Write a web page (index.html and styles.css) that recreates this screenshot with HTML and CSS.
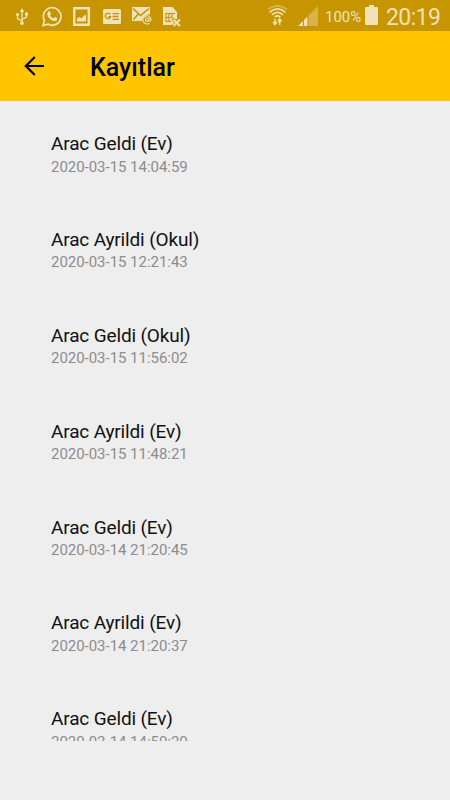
FILE: index.html
```html
<!DOCTYPE html>
<html lang="tr">
<head>
  <meta charset="UTF-8" />
  <meta name="viewport" content="width=device-width, initial-scale=1.0"/>
  <title>Kayıtlar</title>
  <link rel="stylesheet" href="styles.css">
</head>
<body>

  <div class="status-bar">
    <div class="notifications">
      <!-- USB -->
      <svg class="usb" width="14" height="20" viewBox="0 0 14 20">
        <path d="M7 4V16M7 14L2.500 11.500V8M7 12.500L11.500 10V7" fill="none" stroke="currentColor" stroke-width="1.300"/>
        <path d="M7 1L9.300 5H4.700zM10 5.500h3v3h-3z" fill="currentColor"/>
        <circle cx="2.500" cy="7.500" r="1.600" fill="currentColor"/>
        <circle cx="7" cy="16.300" r="1.800" fill="currentColor"/>
      </svg>
      <!-- WhatsApp -->
      <svg class="whatsapp" width="20" height="21" viewBox="0 0 20 21">
        <path d="M1 19.500L2.400 14.500A8.800 8.800 0 1 1 5.900 18.100Z" fill="none" stroke="currentColor" stroke-width="1.700"/>
        <path d="M6.700 5.300C7.300 5 7.900 5.200 8.100 5.700L8.900 7.600C9 8.100 8 8.900 8 9.200C8.800 10.700 9.900 11.700 11.500 12.300C12 12.400 12.500 11 13 11.100L15 12.100C15.500 12.400 15.200 13.800 14.500 14.400C12.500 16 9.600 14.500 7.700 12.700C5.500 10.500 4.200 7.500 6.700 5.300Z" fill="currentColor"/>
      </svg>
      <!-- Gallery -->
      <svg class="gallery" width="17" height="19" viewBox="0 0 17 19">
        <path d="M1.250 1.250h14.500v16.500H1.250z" fill="none" stroke="currentColor" stroke-width="2.400"/>
        <path d="M4 14.500V11.500L6.500 10L8.500 11.500L11 8.500L13 8V14.500z" fill="currentColor"/>
      </svg>
      <!-- News -->
      <svg class="news" width="18" height="15" viewBox="0 0 18 15">
        <rect width="18" height="15" rx="1.500" fill="currentColor"/>
        <path d="M7.300 5.400A2.700 2.700 0 1 0 7.600 7.700H5.300M9.500 4.600H16M9.500 7.500H15.300M9.500 10.400H16" fill="none" stroke="#c39207" stroke-width="1.300"/>
      </svg>
      <!-- Mail -->
      <svg class="mail" width="20" height="19" viewBox="0 0 20 19">
        <path d="M0 1h18v7.500C13.500 8 10.500 10.500 10 15H0z" fill="currentColor"/>
        <path d="M1 2.500L8.500 9.500L17 2.500M1.500 13.500L6.300 8" fill="none" stroke="#c39207" stroke-width="1.500"/>
        <circle cx="15.200" cy="13.700" r="1.700" fill="none" stroke="currentColor" stroke-width="1.100"/>
        <path d="M16.900 11.700V14.600Q18.200 15.800 19.100 13.800A4.100 4.100 0 1 0 17.400 17.200" fill="none" stroke="currentColor" stroke-width="1.100"/>
      </svg>
      <!-- No SIM -->
      <svg class="sim" width="19" height="20" viewBox="0 0 19 20">
        <path d="M0 0H9.500L14 5V11.500L13.500 12.500L10.500 11L8.500 12.500L11.300 15.700L9 18H0z" fill="currentColor"/>
        <path d="M2.500 6.500H12M3 6V14.500H8.500M6 6.500V14M9 6.500V11M3 10.500H9" fill="none" stroke="#c39207" stroke-width="1.100"/>
        <path d="M10.500 12.500L17 19M17 12.500L10.500 19" stroke="currentColor" stroke-width="1.900"/>
      </svg>
    </div>

    <div class="system">
      <!-- Wifi -->
      <svg class="wifi" width="21" height="21" viewBox="0 0 21 21">
        <path d="M1 4.500Q10.500 -3 20 4.500" fill="none" stroke="currentColor" stroke-width="1.700" opacity="0.400"/>
        <path d="M2.500 7.300Q10.500 0.500 18.500 7.300M5 9.800Q10.500 5 16 9.800M7.700 12Q10.500 9.700 13.300 12" fill="none" stroke="currentColor" stroke-width="1.700"/>
        <path d="M8 14V18M12.700 20V16" stroke="currentColor" stroke-width="1.500"/>
        <path d="M5.200 17H10.800L8 20.700zM10 16.500H15.500L12.700 12.800z" fill="currentColor"/>
      </svg>
      <!-- Signal -->
      <svg class="signal" width="20" height="20" viewBox="0 0 20 20">
        <path d="M20 0V20H10.500V9.500z" fill="currentColor" opacity="0.400"/>
        <path d="M9.500 10.500V20H6V14zM5 15V20H0z" fill="currentColor"/>
      </svg>
      <span class="percent">100%</span>
      <!-- Battery -->
      <svg class="battery" width="13" height="20" viewBox="0 0 13 20">
        <path d="M4 0H9V2H12Q13 2 13 3V19Q13 20 12 20H1Q0 20 0 19V3Q0 2 1 2H4z" fill="currentColor"/>
      </svg>
      <span class="clock">20:19</span>
    </div>
  </div>

  <header>
    <svg class="back" width="20" height="20" viewBox="0 0 20 20">
      <path d="M20 10H2M10.800 1L1.800 10L10.800 19" fill="none" stroke="currentColor" stroke-width="2.200"/>
    </svg>
    <h1>Kayıtlar</h1>
  </header>

  <div class="list">
    <div class="item">
      <span class="name">Arac Geldi (Ev)</span>
      <span class="date">2020-03-15 14:04:59</span>
    </div>
    <div class="item">
      <span class="name">Arac Ayrildi (Okul)</span>
      <span class="date">2020-03-15 12:21:43</span>
    </div>
    <div class="item">
      <span class="name">Arac Geldi (Okul)</span>
      <span class="date">2020-03-15 11:56:02</span>
    </div>
    <div class="item">
      <span class="name">Arac Ayrildi (Ev)</span>
      <span class="date">2020-03-15 11:48:21</span>
    </div>
    <div class="item">
      <span class="name">Arac Geldi (Ev)</span>
      <span class="date">2020-03-14 21:20:45</span>
    </div>
    <div class="item">
      <span class="name">Arac Ayrildi (Ev)</span>
      <span class="date">2020-03-14 21:20:37</span>
    </div>
    <div class="item">
      <span class="name">Arac Geldi (Ev)</span>
      <span class="date">2020-03-14 14:50:20</span>
    </div>
  </div>

</body>
</html>
```

FILE: styles.css
```css
body {
  font-family: Roboto, sans-serif;
  margin: 0;
  height: 800px;
  overflow: hidden;
  background-color: #eeeeee;
  color: #111;
}
.status-bar {
  display: flex;
  justify-content: space-between;
  height: 31px;
  padding: 0 9px 0 15px;
  background-color: #c69500;
  color: #f0e2b8;
}
.notifications, .system {
  display: flex;
  align-items: flex-start;
}
.status-bar svg {
  display: block;
  flex: none;
}
.usb {
  margin-top: 7px;
}
.whatsapp {
  margin: 6px 0 0 13px;
}
.gallery {
  margin: 7px 0 0 11px;
}
.news {
  margin: 9px 0 0 13px;
}
.mail {
  margin: 6px 0 0 11px;
}
.sim {
  margin: 7px 0 0 11px;
}
.wifi {
  margin-top: 5px;
}
.signal {
  margin: 6px 0 0 10px;
}
.percent {
  margin-left: 7px;
  width: 40px;
  font-size: 15px;
  line-height: 34px;
}
.battery {
  margin-top: 5px;
}
.clock {
  margin-left: 8px;
  width: 55px;
  font-size: 23px;
  letter-spacing: -0.600px;
  line-height: 35px;
}
header {
  display: flex;
  align-items: center;
  height: 70px;
  padding-left: 24px;
  background-color: #ffc600;
  color: #000;
}
h1 {
  margin: 3px 0 0 46px;
  font-size: 25px;
  font-weight: 500;
  line-height: 30px;
}
.list {
  height: 640px;
  overflow: hidden;
}
.item {
  display: flex;
  flex-direction: column;
  box-sizing: border-box;
  height: 95.900px;
  padding: 31px 0 0 51px;
}
.name {
  font-size: 19px;
  letter-spacing: -0.150px;
  line-height: 24px;
}
.date {
  margin-top: 0.600px;
  font-size: 15px;
  letter-spacing: -0.030px;
  line-height: 20px;
  color: #8c8c8c;
}
```
